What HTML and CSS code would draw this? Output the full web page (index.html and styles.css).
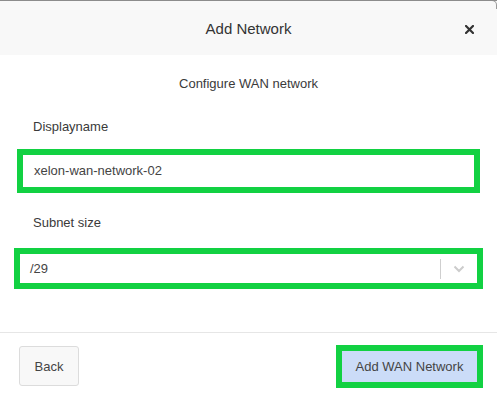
FILE: index.html
```html
<!DOCTYPE html>
<html>
<head>
<meta charset="utf-8">
<link rel="stylesheet" href="styles.css">
</head>
<body>
<div class="modal">
  <div class="header">
    <span></span>
    <h1 class="title">Add Network</h1>
    <button class="close" aria-label="Close">
      <svg width="9" height="9" viewBox="0 0 9 9"><path d="M1 1 L8 8 M8 1 L1 8" stroke="#333" stroke-width="2.2" stroke-linecap="square"/></svg>
    </button>
  </div>
  <div class="body">
    <p class="subtitle">Configure WAN network</p>
    <label class="label">Displayname</label>
    <div class="input">xelon-wan-network-02</div>
    <label class="label label-subnet">Subnet size</label>
    <div class="select">
      <span class="select-value">/29</span>
      <span class="select-sep"></span>
      <span class="select-arrow">
        <svg width="12" height="8" viewBox="0 0 12 8"><path d="M1.5 1.5 L6 6 L10.5 1.5" fill="none" stroke="#cccccc" stroke-width="2"/></svg>
      </span>
    </div>
  </div>
  <div class="footer">
    <button class="btn btn-back">Back</button>
    <button class="btn btn-primary">Add WAN Network</button>
  </div>
</div>
</body>
</html>
```

FILE: styles.css
```css
* { box-sizing: border-box; }
html, body { margin: 0; padding: 0; background: #ffffff; }
body {
  font-family: "Liberation Sans", Arial, sans-serif;
  font-size: 13px;
  color: #3a3a3a;
}
.modal {
  position: relative;
  width: 497px;
  height: 405px;
  border-top: 1px solid #8c8c8c;
  overflow: hidden;
  display: flex;
  flex-direction: column;
  background: #fff;
}
.modal::after {
  content: "";
  position: absolute;
  top: -1px;
  right: 0;
  width: 8px;
  height: 8px;
  border-top: 1px solid #8c8c8c;
  border-right: 1px solid #9a9a9a;
  border-top-right-radius: 5px;
  background: transparent;
}
.header {
  height: 54px;
  background: #f8f8f8;
  display: grid;
  grid-template-columns: 1fr auto 1fr;
  align-items: center;
}
.title {
  margin: 0;
  font-size: 15px;
  font-weight: normal;
  color: #333;
  padding-top: 1px;
}
.close {
  justify-self: end;
  margin-right: 23px;
  background: none;
  border: 0;
  padding: 0;
  width: 9px;
  height: 9px;
  display: flex;
  margin-top: 3px;
}
.body {
  display: flex;
  flex-direction: column;
  padding: 0 20px;
  height: 278px;
  border-bottom: 1px solid #e6e6e6;
}
.subtitle {
  margin: 21px 0 0;
  text-align: center;
  line-height: 16px;
  color: #3a3a3a;
}
.label {
  margin: 27px 0 0 13px;
  line-height: 16px;
  color: #3a3a3a;
}
.input {
  margin: 20px 3px 0;
  height: 32px;
  line-height: 32px;
  padding-left: 11px;
  outline: 6px solid #12d142;
  background: #fff;
  color: #444;
}
.label-subnet { margin-top: 28px; }
.select {
  margin: 23px 0 0;
  height: 29px;
  outline: 6px solid #12d142;
  background: #fff;
  display: flex;
  align-items: center;
}
.select-value {
  flex: 1;
  padding-left: 10px;
  color: #444;
}
.select-sep {
  width: 1px;
  height: 20px;
  background: #cfcfcf;
}
.select-arrow {
  width: 36px;
  display: flex;
  justify-content: center;
  padding-top: 1px;
}
.footer {
  flex: 1;
  display: flex;
  justify-content: space-between;
  align-items: center;
  padding: 0 20px 6px 19px;
}
.btn {
  font-family: inherit;
  font-size: 13px;
  color: #444;
  cursor: pointer;
}
.btn-back {
  width: 60px;
  height: 40px;
  background: #f8f8f8;
  border: 1px solid #dcdcdc;
  border-radius: 3px;
}
.btn-primary {
  width: 135px;
  height: 31px;
  background: #cbdcf8;
  border: 0;
  outline: 6px solid #12d142;
  margin-top: 1px;
}
```
